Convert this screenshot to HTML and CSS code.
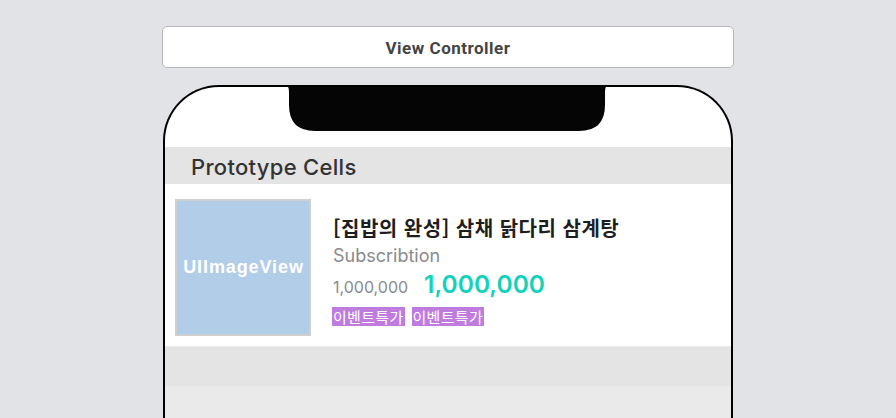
FILE: index.html
```html
<!DOCTYPE html>
<html lang="ko">
<head>
<meta charset="utf-8">
<link rel="stylesheet" href="styles.css">
</head>
<body>
<div class="stage">
  <div class="vc-bar">View Controller</div>
  <div class="phone">
    <div class="top-area">
      <svg class="notch" width="324" height="46" viewBox="0 0 324 46"><path d="M0 0 H324 Q320 0 320 7 V20 Q320 46 294 46 H30 Q4 46 4 20 V7 Q4 0 0 0 Z" fill="#050505"/></svg>
    </div>
    <div class="section-header">Prototype Cells</div>
    <div class="cell">
      <div class="image-view"><span>UIImageView</span></div>
      <div class="info">
        <div class="title">[집밥의 완성] 삼채 닭다리 삼계탕</div>
        <div class="subtitle">Subscribtion</div>
        <div class="prices">
          <span class="old-price">1,000,000</span>
          <span class="new-price">1,000,000</span>
        </div>
        <div class="tags">
          <span class="tag">이벤트특가</span>
          <span class="tag">이벤트특가</span>
        </div>
      </div>
    </div>
    <div class="footer-band"></div>
    <div class="rest"></div>
  </div>
</div>
</body>
</html>
```
FILE: styles.css
```css
* { box-sizing: border-box; }
html, body { margin: 0; padding: 0; }
body {
  background: #e2e3e7;
  width: 896px;
  height: 418px;
  overflow: hidden;
  font-family: Inter, "Noto Sans", sans-serif;
}
.stage {
  padding-top: 26px;
  margin-left: 162px;
  width: 572px;
}
.vc-bar {
  height: 42px;
  background: #fff;
  border: 1px solid #b7b7b9;
  border-radius: 5px;
  display: flex;
  align-items: center;
  justify-content: center;
  font-family: Roboto, Inter, sans-serif;
  font-weight: 700;
  font-size: 17px;
  letter-spacing: 0.5px;
  color: #444;
  padding-top: 1px;
}
.phone {
  margin-top: 17px;
  margin-left: 1px;
  width: 570px;
  height: 360px;
  border: 2px solid #000;
  border-bottom: none;
  border-radius: 56px 56px 0 0;
  background: #fff;
  overflow: hidden;
  position: relative;
}
.top-area {
  height: 60px;
  position: relative;
}
.notch {
  position: absolute;
  left: 120px;
  top: -2px;
  display: block;
}
.section-header {
  height: 37px;
  background: #e4e4e4;
  padding-left: 26px;
  display: flex;
  align-items: center;
  font-size: 22px;
  font-weight: 500;
  color: #333;
  letter-spacing: 0.3px;
  padding-top: 2px;
}
.cell {
  height: 163px;
  display: flex;
  padding: 15px 10px;
  background: #fff;
  border-bottom: 1px solid #ececec;
}
.image-view {
  width: 136px;
  height: 137px;
  background: #b2cde8;
  border: 2px solid #cfcfcf;
  display: flex;
  align-items: center;
  justify-content: center;
  flex-shrink: 0;
}
.image-view span {
  font-family: "Liberation Sans", Arial, sans-serif;
  font-weight: 700;
  font-size: 18px;
  letter-spacing: 0.9px;
  color: #fff;
  margin-left: 1px;
}
.info {
  margin-left: 22px;
  padding-top: 15px;
  display: flex;
  flex-direction: column;
}
.title {
  font-family: "Noto Sans CJK KR", sans-serif;
  font-weight: 700;
  font-size: 20px;
  letter-spacing: 0.5px;
  line-height: 28px;
  color: #1e1e1e;
}
.subtitle {
  font-size: 18px;
  line-height: 26px;
  margin-top: 1px;
  color: #8a8a8e;
}
.prices {
  display: flex;
  align-items: baseline;
  margin-top: 0;
  height: 32px;
}
.old-price {
  font-size: 16px;
  color: #8a8a8e;
}
.new-price {
  margin-left: 16px;
  font-size: 24.5px;
  font-weight: 600;
  color: #14d2b8;
}
.tags {
  display: flex;
  gap: 7px;
  margin-top: 6px;
  margin-left: -1px;
}
.tag {
  background: #c07bde;
  color: #fff;
  font-family: "Noto Sans CJK KR", sans-serif;
  font-size: 15px;
  line-height: 19px;
  height: 19px;
  padding: 0 1px;
  letter-spacing: 0.3px;
}
.footer-band {
  height: 39px;
  background: #e4e4e4;
}
.rest {
  height: 100px;
  background: #eaeaea;
}
```
